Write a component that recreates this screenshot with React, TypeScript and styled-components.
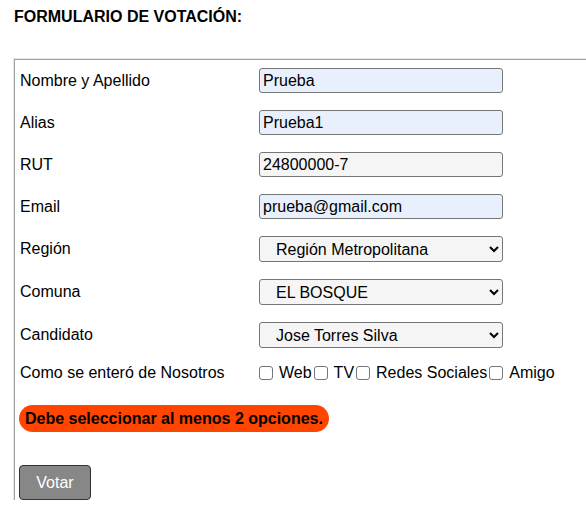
import React from "react";
import styled, { createGlobalStyle } from "styled-components";

const Global = createGlobalStyle`
  html, body { margin: 0; padding: 0; background: #fff; overflow: hidden; }
  body { font-family: "Liberation Sans", Arial, sans-serif; font-size: 16px; color: #000; }
`;

const Page = styled.div`
  padding: 7px 0 0 13px;
`;

const Title = styled.h3`
  margin: 0;
  padding-left: 1px;
  font-size: 16px;
  font-weight: bold;
  line-height: 19px;
`;

const Fieldset = styled.fieldset`
  margin: 32px 0 0 0;
  padding: 9px 0 0 5px;
  border: 1px solid #e6e6e6;
  border-right: none;
  border-bottom: none;
  box-shadow: inset 1px 1px 0 #a0a0a0;
  min-inline-size: auto;
  box-sizing: border-box;
`;

const Row = styled.div<{ $top?: number }>`
  display: grid;
  grid-template-columns: 240px auto;
  align-items: center;
  margin-top: ${(p) => p.$top ?? 0}px;
`;

const Label = styled.label`
  padding-left: 1px;
  line-height: 18px;
`;

const TextInput = styled.input<{ $filled?: boolean }>`
  width: 244px;
  height: 25px;
  box-sizing: border-box;
  border: 1px solid #767676;
  border-radius: 3px;
  padding: 0 3px;
  font-family: "Liberation Sans", Arial, sans-serif;
  font-size: 16px;
  color: #000;
  background: ${(p) => (p.$filled ? "#e8f0fe" : "#f5f5f5")};
  outline: none;
`;

const Select = styled.select`
  width: 244px;
  height: 26px;
  box-sizing: border-box;
  border: 1px solid #767676;
  border-radius: 3px;
  padding: 0 0 0 12px;
  font-family: "Liberation Sans", Arial, sans-serif;
  font-size: 16px;
  color: #000;
  background: #f5f5f5;
`;

const Options = styled.div`
  display: flex;
  align-items: center;
  gap: 2px;
`;

const Option = styled.label`
  display: flex;
  align-items: center;
  gap: 6px;
  line-height: 18px;
`;

const Check = styled.input`
  appearance: none;
  -webkit-appearance: none;
  margin: 0;
  width: 14px;
  height: 14px;
  box-sizing: border-box;
  border: 1px solid #767676;
  border-radius: 3px;
  background: #fff;
`;

const ErrorPill = styled.div`
  display: inline-block;
  align-self: flex-start;
  margin: 23px 0 0 0;
  padding: 0 6px 0 6px;
  height: 27px;
  line-height: 27px;
  background: #ff4500;
  border-radius: 14px;
  font-weight: bold;
  color: #000;
`;

const Actions = styled.div`
  margin-top: 33px;
`;

const Button = styled.button`
  width: 72px;
  height: 35px;
  background: #878787;
  color: #fff;
  border: 1px solid #333;
  border-radius: 4px;
  font-family: "Liberation Sans", Arial, sans-serif;
  font-size: 16px;
  display: block;
`;

const Body = styled.div`
  display: flex;
  flex-direction: column;
`;

export default function App() {
  return (
    <Page>
      <Global />
      <Title>FORMULARIO DE VOTACIÓN:</Title>
      <Fieldset>
        <Body>
          <Row>
            <Label>Nombre y Apellido</Label>
            <TextInput $filled defaultValue="Prueba" />
          </Row>
          <Row $top={17}>
            <Label>Alias</Label>
            <TextInput $filled defaultValue="Prueba1" />
          </Row>
          <Row $top={17}>
            <Label>RUT</Label>
            <TextInput defaultValue="24800000-7" />
          </Row>
          <Row $top={17}>
            <Label>Email</Label>
            <TextInput $filled defaultValue="prueba@gmail.com" />
          </Row>
          <Row $top={17}>
            <Label>Región</Label>
            <Select defaultValue="rm">
              <option value="rm">Región Metropolitana</option>
            </Select>
          </Row>
          <Row $top={17}>
            <Label>Comuna</Label>
            <Select defaultValue="eb">
              <option value="eb">EL BOSQUE</option>
            </Select>
          </Row>
          <Row $top={17}>
            <Label>Candidato</Label>
            <Select defaultValue="jts">
              <option value="jts">Jose Torres Silva</option>
            </Select>
          </Row>
          <Row $top={16}>
            <Label>Como se enteró de Nosotros</Label>
            <Options>
              <Option><Check type="checkbox" />Web</Option>
              <Option><Check type="checkbox" />TV</Option>
              <Option><Check type="checkbox" />Redes Sociales</Option>
              <Option><Check type="checkbox" />Amigo</Option>
            </Options>
          </Row>
          <ErrorPill>Debe seleccionar al menos 2 opciones.</ErrorPill>
          <Actions>
            <Button type="button">Votar</Button>
          </Actions>
        </Body>
      </Fieldset>
    </Page>
  );
}
